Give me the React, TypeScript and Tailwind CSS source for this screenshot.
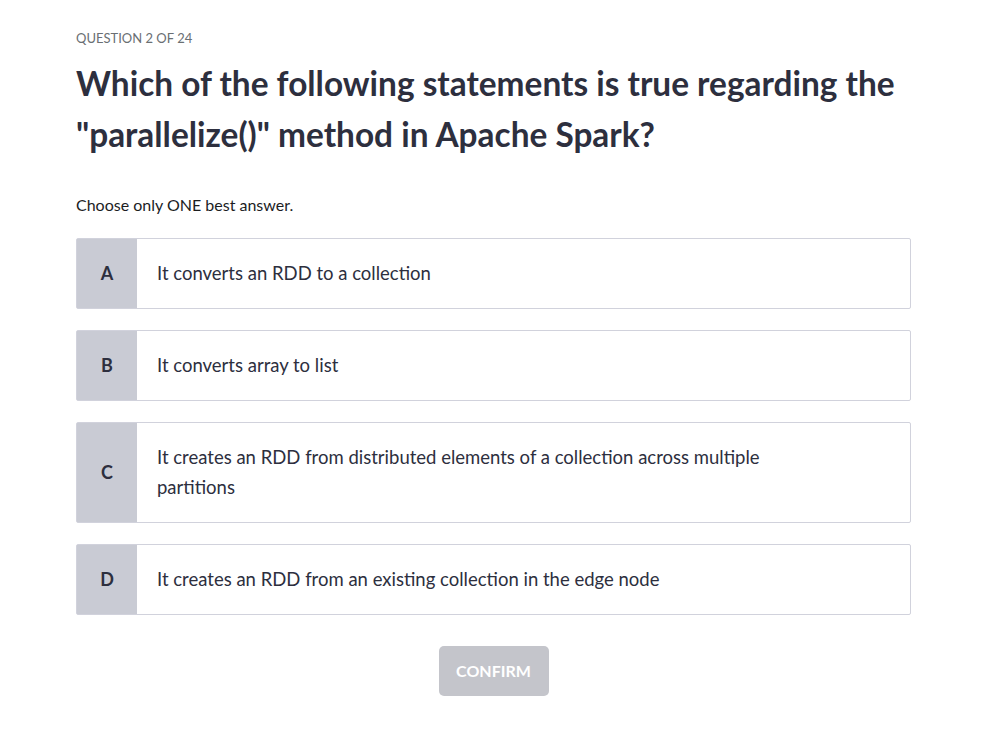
const options = [
  { letter: 'A', text: 'It converts an RDD to a collection' },
  { letter: 'B', text: 'It converts array to list' },
  {
    letter: 'C',
    text: 'It creates an RDD from distributed elements of a collection across multiple partitions',
  },
  { letter: 'D', text: 'It creates an RDD from an existing collection in the edge node' },
];

export default function App() {
  return (
    <div className="min-h-screen bg-white font-['Lato',sans-serif] text-[#2d2f3e]">
      <div className="w-[835px] pl-[76px] pt-[30px] box-content">
        <p className="text-[13px] leading-4 uppercase text-[#6a6f73]">Question 2 of 24</p>
        <h1 className="mt-[12px] text-[33.4px] font-bold leading-[51px] text-[#2d2f3e]">
          Which of the following statements is true regarding the "parallelize()" method in Apache
          Spark?
        </h1>
        <p className="mt-[35px] text-[16px] leading-5 text-[#1c1d1f]">Choose only ONE best answer.</p>

        <div className="mt-[23px] flex flex-col gap-[21px]">
          {options.map((o) => (
            <div
              key={o.letter}
              className="flex min-h-[71px] rounded-[2px] border border-[#d1d2dc] bg-white"
            >
              <div className="flex w-[60px] shrink-0 items-center justify-center bg-[#c9cbd4] text-[18px] font-bold text-[#2d2f3e]">
                {o.letter}
              </div>
              <div className="flex items-center pt-[19px] pb-[20px] pl-[20px] pr-[110px] text-[18.5px] leading-[30px] text-[#2d2f3e]">
                {o.text}
              </div>
            </div>
          ))}
        </div>

        <div className="mt-[31px] flex justify-center">
          <button
            type="button"
            className="h-[50px] w-[110px] rounded-[5px] bg-[#c4c5cb] text-[16px] font-bold uppercase text-white"
          >
            Confirm
          </button>
        </div>
      </div>
    </div>
  );
}
